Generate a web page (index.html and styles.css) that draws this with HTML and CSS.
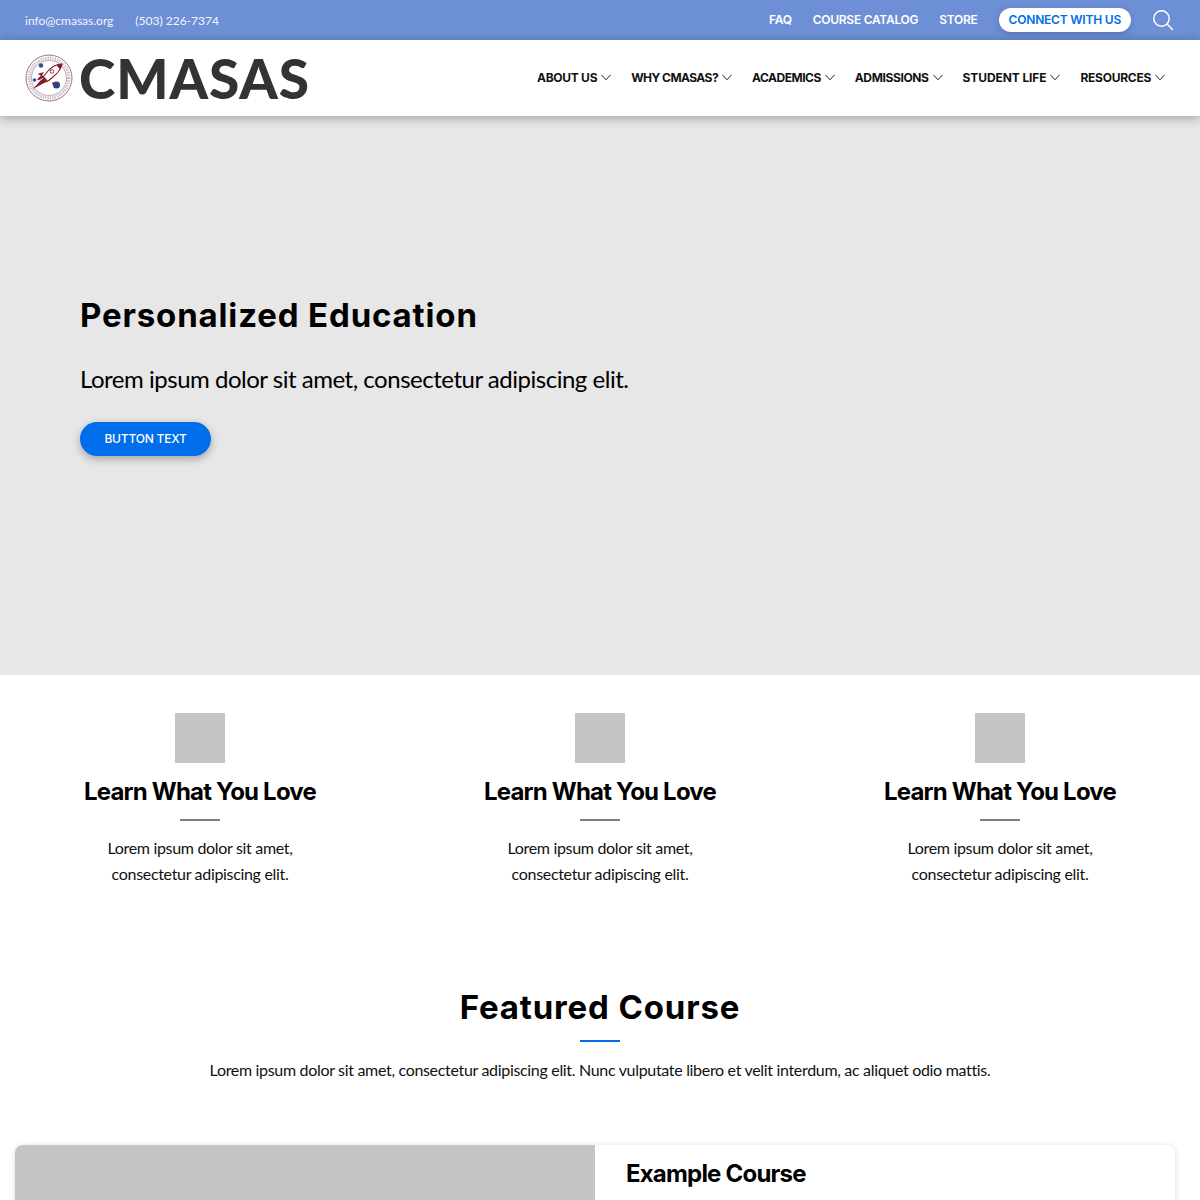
FILE: index.html
```html
<!DOCTYPE html>
<html lang="en">
<head>
<meta charset="utf-8">
<title>CMASAS</title>
<link rel="stylesheet" href="styles.css">
</head>
<body>
<div class="page">
  <div class="topbar">
    <div class="contact"><span>info@cmasas.org</span><span>(503) 226-7374</span></div>
    <div class="toplinks">
      <a>FAQ</a><a>COURSE CATALOG</a><a>STORE</a>
      <a class="connect">CONNECT WITH US</a>
      <svg class="search" width="22" height="22" viewBox="0 0 22 22" fill="none" stroke="#fff" stroke-width="1.5" stroke-linecap="round"><circle cx="9.5" cy="9.5" r="7.7"/><path d="M15 15l5.5 5.5"/></svg>
    </div>
  </div>
  <header class="header">
    <div class="brand">
      <svg class="seal" width="48" height="48" viewBox="0 0 48 48" fill="none">
        <circle cx="24" cy="24" r="23" stroke="#a4727c" stroke-width="1"/>
        <circle cx="24" cy="24" r="19.800" stroke="#9a94ae" stroke-width="3.400" stroke-dasharray="1.300 1.100" opacity=".6"/>
        <circle cx="24" cy="24" r="17.500" stroke="#a4727c" stroke-width=".6"/>
        <circle cx="16" cy="11.500" r="2.300" fill="#3b4c90"/>
        <circle cx="9.500" cy="26" r="1.800" fill="#3b4c90"/>
        <circle cx="31.500" cy="31" r="3.500" fill="#2f3f85"/>
        <path d="M37 10c-5 0-10 2.500-14 7l-5 6 4.500 4.500 6-5c4.500-3.500 7.500-8 8.500-12.500z" fill="#fff" stroke="#7d1a26" stroke-width="1.100"/>
        <path d="M37 10c-2 .1-3.700.6-5.500 1.400l3.800 3.800c.8-1.700 1.500-3.400 1.700-5.200z" fill="#7d1a26"/>
        <path d="M19 18l-6.500 2 3.500 1.500-4 4 2 .5 6-3 2 3-5-5z" fill="#7d1a26"/>
        <path d="M16 26l-8 9 11-6 3-1-3-4z" fill="#7d1a26"/>
        <path d="M27 29l1.500 3 1-4z" fill="#7d1a26"/>
        <circle cx="27" cy="17.500" r="1.800" stroke="#7d1a26" stroke-width=".8"/>
      </svg>
      <span class="wordmark">CMASAS</span>
    </div>
    <nav class="nav">
      <a>ABOUT US<svg class="chev" width="10" height="7" viewBox="0 0 10 7" fill="none" stroke="#222" stroke-width="1"><path d="M.4.8L5 5.800 9.600.8"/></svg></a>
      <a class="why">WHY CMASAS?<svg class="chev" width="10" height="7" viewBox="0 0 10 7" fill="none" stroke="#222" stroke-width="1"><path d="M.4.8L5 5.800 9.600.8"/></svg></a>
      <a class="academics">ACADEMICS<svg class="chev" width="10" height="7" viewBox="0 0 10 7" fill="none" stroke="#222" stroke-width="1"><path d="M.4.8L5 5.800 9.600.8"/></svg></a>
      <a class="admissions">ADMISSIONS<svg class="chev" width="10" height="7" viewBox="0 0 10 7" fill="none" stroke="#222" stroke-width="1"><path d="M.4.8L5 5.800 9.600.8"/></svg></a>
      <a class="life">STUDENT LIFE<svg class="chev" width="10" height="7" viewBox="0 0 10 7" fill="none" stroke="#222" stroke-width="1"><path d="M.4.8L5 5.800 9.600.8"/></svg></a>
      <a>RESOURCES<svg class="chev" width="10" height="7" viewBox="0 0 10 7" fill="none" stroke="#222" stroke-width="1"><path d="M.4.8L5 5.800 9.600.8"/></svg></a>
    </nav>
  </header>
  <section class="hero">
    <h1>Personalized Education</h1>
    <p>Lorem ipsum dolor sit amet, consectetur adipiscing elit.</p>
    <a class="btn">BUTTON TEXT</a>
  </section>
  <section class="features">
    <div class="feature">
      <div class="icon"></div>
      <h3>Learn What You Love</h3>
      <div class="rule"></div>
      <p>Lorem ipsum dolor sit amet,<br>consectetur adipiscing elit.</p>
    </div>
    <div class="feature">
      <div class="icon"></div>
      <h3>Learn What You Love</h3>
      <div class="rule"></div>
      <p>Lorem ipsum dolor sit amet,<br>consectetur adipiscing elit.</p>
    </div>
    <div class="feature">
      <div class="icon"></div>
      <h3>Learn What You Love</h3>
      <div class="rule"></div>
      <p>Lorem ipsum dolor sit amet,<br>consectetur adipiscing elit.</p>
    </div>
  </section>
  <section class="featured">
    <h2>Featured Course</h2>
    <div class="bluerule"></div>
    <p>Lorem ipsum dolor sit amet, consectetur adipiscing elit. Nunc vulputate libero et velit interdum, ac aliquet odio mattis.</p>
  </section>
  <section class="card">
    <div class="card-img"></div>
    <div class="card-body"><h3>Example Course</h3></div>
  </section>
</div>
</body>
</html>
```
FILE: styles.css
```css
* { box-sizing: border-box; }
html, body { margin: 0; padding: 0; }
body { font-family: Lato, "Liberation Sans", sans-serif; color: #000; background: #fff; }
.page { height: 1200px; overflow: hidden; }
h1, h2, h3, p { margin: 0; }
h1, h2, h3, .toplinks, .nav, .btn { font-family: Inter, Lato, sans-serif; }
.topbar { height: 40px; background: #6d8fd6; display: flex; justify-content: space-between; align-items: center; padding: 0 25px; color: #fff; }
.contact { display: flex; gap: 22px; font-size: 12px; color: #f2f5fc; }
.toplinks { display: flex; align-items: center; font-size: 12px; font-weight: 600; letter-spacing: -.27px; padding-bottom: 1px; }
.toplinks a { margin-right: 21px; }
.toplinks .connect { margin-right: 0; background: #fff; color: #006dea; height: 24px; line-height: 24px; padding: 0 10px; border-radius: 12px; letter-spacing: -.2px; box-shadow: 0 2px 6px rgba(40,60,110,.3); }
.search { margin-left: 21px; margin-right: 1px; }
.header { height: 76px; background: #fff; display: flex; justify-content: space-between; align-items: center; padding: 0 35px 0 25px; box-shadow: 0 2px 10px rgba(0,0,0,.3); position: relative; }
.brand { display: flex; align-items: center; gap: 6px; }
.seal { display: block; }
.wordmark { font-size: 55px; font-weight: 900; color: #333; line-height: 76px; letter-spacing: .9px; }
.nav { display: flex; gap: 20px; font-size: 12px; font-weight: 700; color: #111; letter-spacing: -.27px; padding-bottom: 2px; }
.nav a { display: flex; align-items: center; gap: 4px; }
.nav .why { letter-spacing: -.55px; }
.nav .academics { letter-spacing: -.5px; }
.nav .admissions { letter-spacing: -.37px; }
.nav .life { letter-spacing: -.1px; }
.chev { display: block; }
.hero { height: 559px; background: #e7e7e7; padding: 176px 80px 0; }
.hero h1 { font-size: 33px; line-height: 46px; font-weight: 700; letter-spacing: .85px; }
.hero p { font-size: 24px; line-height: 34px; margin-top: 24px; letter-spacing: -.02em; }
.btn { display: inline-block; margin-top: 26px; height: 34px; line-height: 34px; width: 131px; text-align: center; border-radius: 17px; background: #006dea; color: #fff; font-size: 12px; font-weight: 500; letter-spacing: -.2px; box-shadow: 0 3px 8px rgba(0,0,0,.3); }
.features { display: grid; grid-template-columns: repeat(3, 400px); padding-top: 38px; text-align: center; }
.feature { display: flex; flex-direction: column; align-items: center; }
.icon { width: 50px; height: 50px; background: #c4c4c4; }
.feature h3 { font-size: 24px; line-height: 34px; font-weight: 700; margin-top: 12px; letter-spacing: -.8px; }
.rule { width: 40px; height: 2px; background: #808080; margin-top: 10px; }
.feature p { font-size: 16px; line-height: 26px; margin-top: 14px; color: #111; letter-spacing: -.02em; }
.featured { text-align: center; margin-top: 97px; }
.featured h2 { font-size: 33px; line-height: 46px; font-weight: 700; letter-spacing: .85px; }
.bluerule { width: 40px; height: 2px; background: #006dea; margin: 10px auto 0; }
.featured p { font-size: 16px; line-height: 26px; margin-top: 15px; color: #111; letter-spacing: -.02em; }
.card { display: flex; width: 1160px; margin: 62px 0 0 15px; height: 400px; border-radius: 8px; overflow: hidden; box-shadow: 0 1px 6px rgba(0,0,0,.15); }
.card-img { width: 580px; background: #c4c4c4; }
.card-body { flex: 1; padding: 12px 31px; background: #fff; }
.card-body h3 { font-size: 24px; line-height: 34px; font-weight: 700; letter-spacing: -.8px; }
```
